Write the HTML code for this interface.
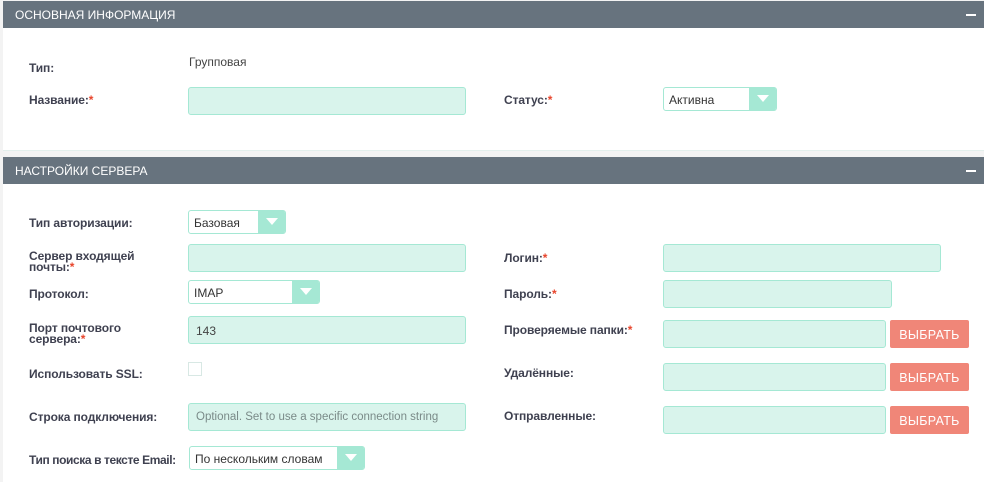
<!DOCTYPE html>
<html><head><meta charset="utf-8"><style>
*{margin:0;padding:0;box-sizing:border-box}
body{width:984px;height:482px;background:#f3f3f3;font-family:"Liberation Sans",sans-serif;position:relative;overflow:hidden}
.a{position:absolute}
.hdr{position:absolute;left:3px;right:0;height:27px;background:#67737e;color:#fff;font-size:12px;padding:7px 0 0 12px}
.hdr .m{position:absolute;right:8px;top:13px;width:10px;height:2px;background:#fff}
.pnl{position:absolute;left:3px;right:0;background:#fff}
.lb{position:absolute;font-size:12px;font-weight:bold;color:#3f4150;white-space:nowrap;letter-spacing:-0.1px}
.lb i{color:#e8452c;font-style:normal}
.in{position:absolute;height:28px;background:#d9f4ec;border:1px solid #a5e8d4;border-radius:3px;font-size:12px;color:#444;padding:7px 0 0 7px}
.sel{position:absolute;height:24px;background:#fff;border:1px solid #a5e8d4;border-radius:3px;font-size:12px;color:#333;padding:5px 0 0 5px}
.sel .ar{position:absolute;right:0;top:-1px;bottom:-1px;width:27px;background:#a5e8d4;border-radius:0 3px 3px 0}
.sel .ar:after{content:"";position:absolute;left:8px;top:8px;border-left:6px solid transparent;border-right:6px solid transparent;border-top:7px solid #fff}
.btn{position:absolute;left:890px;width:79px;height:28px;background:#f08678;border-radius:2px;color:#fff;font-size:12.5px;text-align:center;padding-top:8px;letter-spacing:0.3px}
.two{line-height:11px}
</style></head><body>
<div class="hdr" style="top:1px">ОСНОВНАЯ ИНФОРМАЦИЯ<div class="m"></div></div>
<div class="pnl" style="top:28px;height:123px;border-bottom:1px solid #e3efec"></div>
<div class="lb" style="left:29px;top:61px">Тип:</div>
<div class="a" style="left:189px;top:55px;font-size:12px;color:#444">Групповая</div>
<div class="lb" style="left:29px;top:93px">Название:<i>*</i></div>
<div class="in" style="left:188px;top:87px;width:278px"></div>
<div class="lb" style="left:504px;top:93px">Статус:<i>*</i></div>
<div class="sel" style="left:663px;top:87px;width:114px">Активна<div class="ar"></div></div>

<div class="hdr" style="top:157px">НАСТРОЙКИ СЕРВЕРА<div class="m"></div></div>
<div class="pnl" style="top:184px;height:298px"></div>
<div class="lb" style="left:29px;top:216px">Тип авторизации:</div>
<div class="sel" style="left:188px;top:210px;width:98px">Базовая<div class="ar"></div></div>
<div class="lb two" style="left:29px;top:251px">Сервер входящей<br>почты:<i>*</i></div>
<div class="in" style="left:188px;top:244px;width:278px"></div>
<div class="lb" style="left:29px;top:287px">Протокол:</div>
<div class="sel" style="left:188px;top:280px;width:132px">IMAP<div class="ar"></div></div>
<div class="lb two" style="left:29px;top:323px">Порт почтового<br>сервера:<i>*</i></div>
<div class="in" style="left:188px;top:316px;width:278px">143</div>
<div class="lb" style="left:29px;top:367px">Использовать SSL:</div>
<div class="a" style="left:188px;top:362px;width:14px;height:14px;border:1px solid #d8e8e4;background:#fff"></div>
<div class="lb" style="left:29px;top:410px">Строка подключения:</div>
<div class="in" style="left:188px;top:403px;width:278px;color:#7a8a88;font-size:11.5px">Optional. Set to use a specific connection string</div>
<div class="lb" style="left:29px;top:453px;letter-spacing:-0.4px">Тип поиска в тексте Email:</div>
<div class="sel" style="left:189px;top:446px;width:176px">По нескольким словам<div class="ar"></div></div>

<div class="lb" style="left:504px;top:251px">Логин:<i>*</i></div>
<div class="in" style="left:663px;top:244px;width:278px"></div>
<div class="lb" style="left:504px;top:287px">Пароль:<i>*</i></div>
<div class="in" style="left:663px;top:280px;width:229px"></div>
<div class="lb" style="left:504px;top:323px">Проверяемые папки:<i>*</i></div>
<div class="in" style="left:663px;top:320px;width:223px"></div>
<div class="btn" style="top:320px">ВЫБРАТЬ</div>
<div class="lb" style="left:504px;top:366px">Удалённые:</div>
<div class="in" style="left:663px;top:363px;width:223px"></div>
<div class="btn" style="top:363px">ВЫБРАТЬ</div>
<div class="lb" style="left:504px;top:409px">Отправленные:</div>
<div class="in" style="left:663px;top:406px;width:223px"></div>
<div class="btn" style="top:406px">ВЫБРАТЬ</div>
</body></html>
